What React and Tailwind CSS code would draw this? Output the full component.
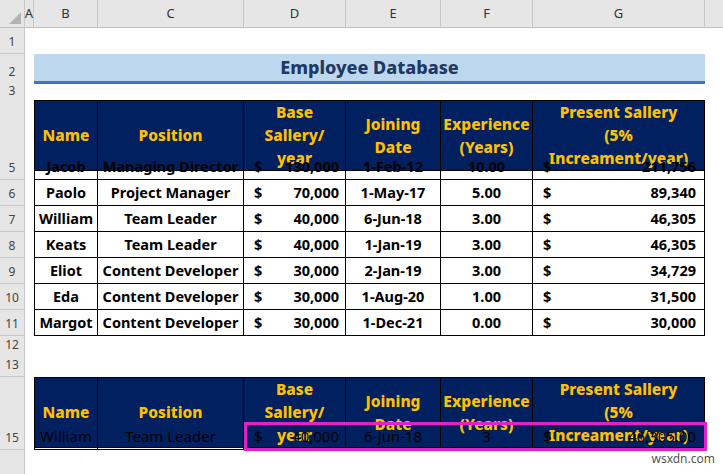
const cols = "grid grid-cols-[25px_9px_64px_146px_102px_95px_92px_172px_1fr]";
const body = "font-['Liberation_Sans',Arial,sans-serif]";
const cal = "font-['Lato','Open_Sans',sans-serif]";

function RowNum({ n }) {
  return (
    <div className={"bg-[#e6e6e6] border-r border-b border-[#c8c8c8] text-[#444] text-[12px] flex items-end justify-center pb-[2px] " + cal}>
      {n}
    </div>
  );
}

function Row({ n, h, children }) {
  return (
    <div className={cols + " " + h}>
      <RowNum n={n} />
      <div />
      {children}
      <div />
    </div>
  );
}

function Head() {
  const c = "bg-[#002060] text-[#ffc000] font-extrabold text-[15.5px] leading-[23px] flex items-center justify-center text-center border-r border-t border-b border-black " + cal;
  return (
    <>
      <div className={c + " border-l"}>Name</div>
      <div className={c}>Position</div>
      <div className={c}>Base Sallery/<br />year</div>
      <div className={c}>Joining Date</div>
      <div className={c}>Experience<br />(Years)</div>
      <div className={c}>Present Sallery<br />(5% Increament/year)</div>
    </>
  );
}

const data = [
  ["Jacob", "Managing Director", "130,000", "1-Feb-12", "10.00", "211,756"],
  ["Paolo", "Project Manager", "70,000", "1-May-17", "5.00", "89,340"],
  ["William", "Team Leader", "40,000", "6-Jun-18", "3.00", "46,305"],
  ["Keats", "Team Leader", "40,000", "1-Jan-19", "3.00", "46,305"],
  ["Eliot", "Content Developer", "30,000", "2-Jan-19", "3.00", "34,729"],
  ["Eda", "Content Developer", "30,000", "1-Aug-20", "1.00", "31,500"],
  ["Margot", "Content Developer", "30,000", "1-Dec-21", "0.00", "30,000"],
];

function DataCells({ r, last }) {
  const c = "border-r border-b border-black text-black flex items-center " + body + " " + (last ? "font-normal text-[15px]" : "font-bold text-[14.5px]");
  return (
    <>
      <div className={c + " border-l justify-center"}>{r[0]}</div>
      <div className={c + " justify-center"}>{r[1]}</div>
      <div className={c + " justify-between pl-[10px] pr-[6px]"}><span>$</span><span>{r[2]}</span></div>
      <div className={c + " justify-center"}>{r[3]}</div>
      <div className={c + " justify-center"}>{r[4]}</div>
      <div className={c + " justify-between pl-[10px] pr-[8px]"}><span>$</span><span>{r[5]}</span></div>
    </>
  );
}

export default function App() {
  const letters = ["A", "B", "C", "D", "E", "F", "G"];
  return (
    <div className="w-[723px] h-[474px] bg-white overflow-hidden relative">
      <div className={cols + " h-[28px] bg-[#e6e6e6] border-b border-[#bfbfbf]"}>
        <div className="border-r border-[#c8c8c8] relative">
          <div className="absolute right-[3px] bottom-[3px] w-0 h-0 border-l-[12px] border-l-transparent border-b-[12px] border-b-[#b4b4b4]" />
        </div>
        {letters.map((l) => (
          <div key={l} className={"border-r border-[#c8c8c8] text-[13px] text-[#333] flex items-center justify-center " + cal}>{l}</div>
        ))}
        <div />
      </div>
      <Row n={1} h="h-[26px]"><div className="col-span-6" /></Row>
      <Row n={2} h="h-[28px]">
        <div className={"col-span-6 bg-[#bdd7ee] border-b-[3px] border-[#4472c4] flex items-center justify-center text-[#1f3864] font-extrabold text-[18px] " + cal}>
          Employee Database
        </div>
      </Row>
      <Row n={3} h="h-[18px]"><div className="col-span-6" /></Row>
      <Row n={4} h="h-[54px]"><Head /></Row>
      {data.map((r, i) => (
        <Row key={i} n={5 + i} h="h-[26px]"><DataCells r={r} /></Row>
      ))}
      <Row n={12} h="h-[18px]"><div className="col-span-6" /></Row>
      <Row n={13} h="h-[23px]"><div className="col-span-6" /></Row>
      <Row n={14} h="h-[47px]"><Head /></Row>
      <Row n={15} h="h-[26px]">
        <DataCells r={["William", "Team Leader", "40,000", "6-Jun-18", "3", "46,305.00"]} last />
      </Row>
      <div className={cols + " h-[30px]"}>
        <div className="bg-[#e6e6e6] border-r border-[#c8c8c8]" />
      </div>
      <div className="absolute left-[244px] top-[422px] w-[463px] h-[29px] border-[3px] border-[#e61fc8] pointer-events-none" />
      <div className={"absolute right-[8px] bottom-[6px] text-[12px] text-[#555] " + body}>wsxdn.com</div>
    </div>
  );
}
